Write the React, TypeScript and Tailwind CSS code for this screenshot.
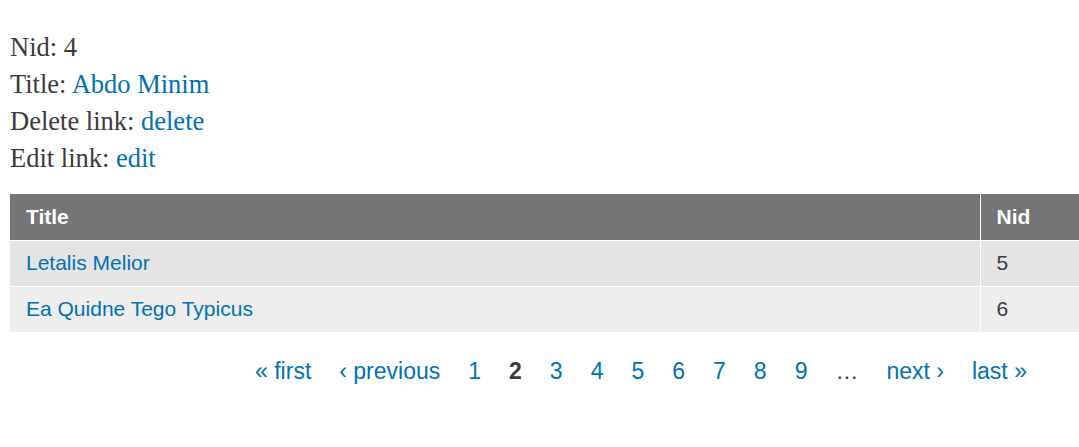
const rows = [
  { title: "Letalis Melior", nid: 5, bg: "bg-[#e4e4e4]" },
  { title: "Ea Quidne Tego Typicus", nid: 6, bg: "bg-[#eeeeee]" },
];

const pages = ["1", "2", "3", "4", "5", "6", "7", "8", "9"];

export default function App() {
  return (
    <main className="w-[1079px] h-[447px] overflow-hidden bg-white text-[#3b3b3b]">
      <div className="w-[1272px] pl-[10px] pt-[29px]">
        <div className="font-['Liberation_Serif',Georgia,serif] text-[26.5px] leading-[37px]">
          <p>Nid: 4</p>
          <p>
            Title: <a className="text-[#0071b3]">Abdo Minim</a>
          </p>
          <p>
            Delete link: <a className="text-[#0071b3]">delete</a>
          </p>
          <p>
            Edit link: <a className="text-[#0071b3]">edit</a>
          </p>
        </div>

        <table className="mt-[17px] w-full border-collapse font-['Liberation_Sans',Arial,sans-serif] text-[21px]">
          <thead>
            <tr className="bg-[#757575] text-white h-[46px] border-b border-white">
              <th className="text-left font-bold pl-4 w-[970px] border-r border-white">Title</th>
              <th className="text-left font-bold pl-4">Nid</th>
            </tr>
          </thead>
          <tbody>
            {rows.map((r) => (
              <tr key={r.nid} className={`${r.bg} h-[46px] border-b border-white`}>
                <td className="pl-4 border-r border-white">
                  <a className="text-[#0071b3]">{r.title}</a>
                </td>
                <td className="pl-4">{r.nid}</td>
              </tr>
            ))}
          </tbody>
        </table>

        <nav className="mt-[25px] flex justify-center gap-[28px] font-['Liberation_Sans',Arial,sans-serif] text-[23px] leading-[26px] text-[#0071b3]">
          <a>« first</a>
          <a>‹ previous</a>
          {pages.map((p) =>
            p === "2" ? (
              <span key={p} className="font-bold text-[#3b3b3b]">{p}</span>
            ) : (
              <a key={p}>{p}</a>
            )
          )}
          <span className="text-[#3b3b3b]">…</span>
          <a>next ›</a>
          <a>last »</a>
        </nav>
      </div>
    </main>
  );
}
